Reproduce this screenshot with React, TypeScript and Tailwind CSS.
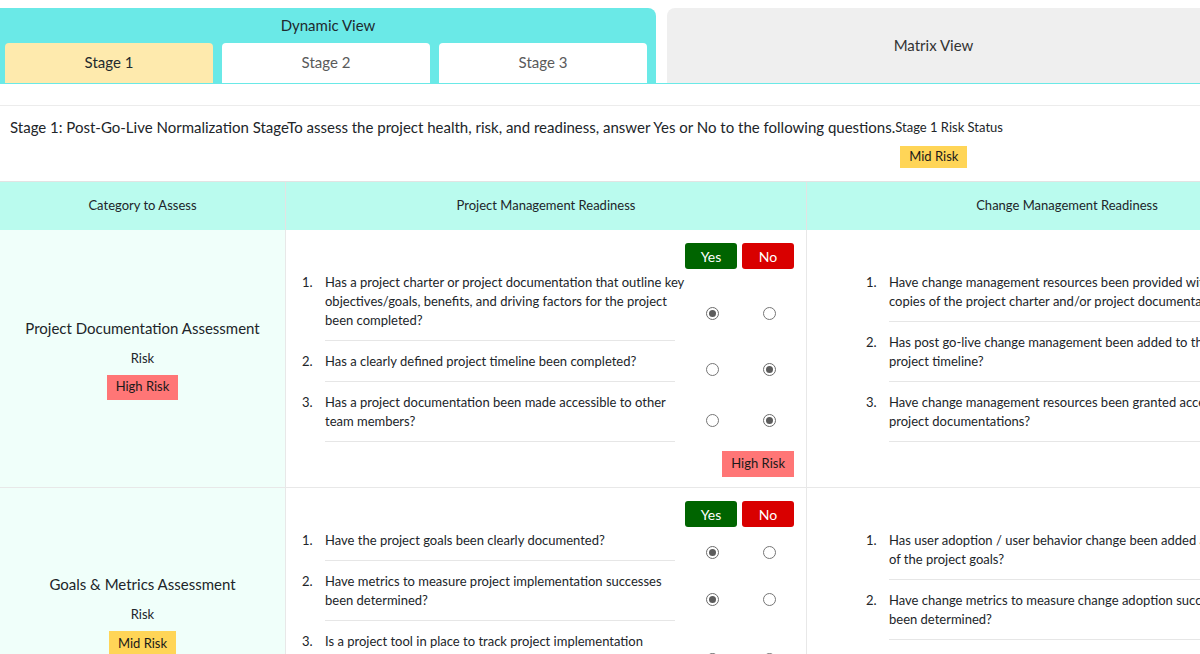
import React from 'react';

type Q = { text: string; answer?: 'yes' | 'no' };

const ROWS = [
  {
    category: 'Project Documentation Assessment',
    risk: 'High Risk',
    minH: '',
    pm: [
      { text: 'Has a project charter or project documentation that outline key objectives/goals, benefits, and driving factors for the project been completed?', answer: 'yes' },
      { text: 'Has a clearly defined project timeline been completed?', answer: 'no' },
      { text: 'Has a project documentation been made accessible to other team members?', answer: 'no' },
    ] as Q[],
    cm: [
      { text: 'Have change management resources been provided with copies of the project charter and/or project documentation?' },
      { text: 'Has post go-live change management been added to the project timeline?' },
      { text: 'Have change management resources been granted access to project documentations?' },
    ] as Q[],
  },
  {
    category: 'Goals & Metrics Assessment',
    risk: 'Mid Risk',
    minH: 'min-h-[255px]',
    pm: [
      { text: 'Have the project goals been clearly documented?', answer: 'yes' },
      { text: 'Have metrics to measure project implementation successes been determined?', answer: 'yes' },
      { text: 'Is a project tool in place to track project implementation progress?', answer: 'yes' },
    ] as Q[],
    cm: [
      { text: 'Has user adoption / user behavior change been added as part of the project goals?' },
      { text: 'Have change metrics to measure change adoption successes been determined?' },
      { text: 'Have change adoption tracking tools been put in place?' },
    ] as Q[],
  },
];

function RiskBadge({ risk, className = '' }: { risk: string; className?: string }) {
  const bg = risk === 'High Risk' ? 'bg-[#ff7676]' : 'bg-[#ffd557]';
  return <span className={`inline-flex items-center px-[9px] text-[13px] text-[#1a1a1a] ${bg} ${className}`}>{risk}</span>;
}

function Radio({ checked }: { checked?: boolean }) {
  return (
    <span className={`w-[13px] h-[13px] rounded-full border bg-white flex items-center justify-center ${checked ? 'border-[#6b6b6b] border-[1.5px]' : 'border-[#767676]'}`}>
      {checked && <span className="w-[7px] h-[7px] rounded-full bg-[#5c5c5c]" />}
    </span>
  );
}

function QuestionList({ items, risk, wide }: { items: Q[]; risk?: string; wide?: boolean }) {
  return (
    <div className="w-[492px] shrink-0 pt-[13px] pb-[10px]">
      <div className="flex justify-end gap-[5px]">
        <div className="w-[52px] h-[26px] rounded-[3px] bg-[#006400] text-white text-[14px] flex items-center justify-center">Yes</div>
        <div className="w-[52px] h-[26px] rounded-[3px] bg-[#d90000] text-white text-[14px] flex items-center justify-center">No</div>
      </div>
      {items.map((q, i) => (
        <div key={i} className="flex text-[13px] leading-[19px] text-[#212529]">
          <div className={`w-[23px] shrink-0 ${i === 0 ? 'pt-[4px]' : 'pt-[11px]'}`}>{i + 1}.</div>
          <div className={`w-[350px] shrink-0 border-b border-[#e6e6e6] pb-[10px] ${i === 0 ? 'pt-[4px]' : 'pt-[11px]'}`}>
            <p className={wide ? 'w-[362px]' : 'w-[350px]'}>{q.text}</p>
          </div>
          <div className="ml-[10px] flex pt-[16px] gap-[5px] items-center">
            <div className="w-[52px] flex justify-center pl-[3px]"><Radio checked={q.answer === 'yes'} /></div>
            <div className="w-[52px] flex justify-center pl-[2px]"><Radio checked={q.answer === 'no'} /></div>
          </div>
        </div>
      ))}
      {risk && (
        <div className="flex justify-end mt-[9px]">
          <RiskBadge risk={risk} className="h-[26px]" />
        </div>
      )}
    </div>
  );
}

export default function App() {
  return (
    <div className="w-[1200px] h-[654px] overflow-hidden bg-white text-[#212529]" style={{ fontFamily: '"Lato", "Noto Sans", sans-serif' }}>
      {/* View tabs */}
      <div className="pt-[8px] flex gap-[11px] border-b border-[#6ae9e7]">
        <div className="w-[656px] h-[75px] bg-[#6ae9e7] rounded-tr-[8px] flex flex-col">
          <div className="h-[35px] flex items-center justify-center text-[15px] text-[#1f2a2e]">Dynamic View</div>
          <div className="flex-1 grid grid-cols-3 gap-[9px] pl-[5px] pr-[9px]">
            <div className="bg-[#feeaad] rounded-t-[4px] flex items-center justify-center text-[15px] text-[#1f2a2e] pb-[1px]">Stage 1</div>
            <div className="bg-white rounded-t-[4px] flex items-center justify-center text-[15px] text-[#5a5a5a] pb-[1px]">Stage 2</div>
            <div className="bg-white rounded-t-[4px] flex items-center justify-center text-[15px] text-[#5a5a5a] pb-[1px]">Stage 3</div>
          </div>
        </div>
        <div className="flex-1 h-[75px] bg-[#efefef] rounded-tl-[8px] flex items-center justify-center text-[15px] text-[#333]">Matrix View</div>
      </div>

      {/* Stage description */}
      <div className="mt-[21px] border-t border-[#ececec] h-[76px] flex items-start pl-[10px] pt-[11px]">
        <span className="text-[15px] leading-[20px] whitespace-nowrap">
          Stage 1: Post-Go-Live Normalization StageTo assess the project health, risk, and readiness, answer Yes or No to the following questions.
        </span>
        <div className="flex flex-col items-start pt-[1px]">
          <span className="text-[13px] leading-[18px] whitespace-nowrap">Stage 1 Risk Status</span>
          <RiskBadge risk="Mid Risk" className="h-[22px] mt-[10px] ml-[5px]" />
        </div>
      </div>

      {/* Assessment table */}
      <div className="grid grid-cols-[286px_521px_520px] w-[1327px]">
        <div className="h-[49px] bg-[#bafbee] border-t border-r border-[#e3e3e3] flex items-center justify-center text-[13px]">Category to Assess</div>
        <div className="h-[49px] bg-[#bafbee] border-t border-r border-[#e3e3e3] flex items-center justify-center text-[13px]">Project Management Readiness</div>
        <div className="h-[49px] bg-[#bafbee] border-t border-[#e3e3e3] flex items-center justify-center text-[13px]">Change Management Readiness</div>

        {ROWS.map((row) => (
          <React.Fragment key={row.category}>
            <div className={`bg-[#f0fffa] border-r border-b border-[#e8e8e8] flex flex-col items-center justify-center ${row.minH}`}>
              <div className="text-[15px] leading-[20px]">{row.category}</div>
              <div className="text-[13px] leading-[18px] mt-[11px]">Risk</div>
              <RiskBadge risk={row.risk} className="h-[25px] mt-[8px]" />
            </div>
            <div className="border-r border-b border-[#e8e8e8] pl-[16px]">
              <QuestionList items={row.pm} risk={row.risk} wide />
            </div>
            <div className="border-b border-[#e8e8e8] pl-[59px]">
              <QuestionList items={row.cm} />
            </div>
          </React.Fragment>
        ))}
      </div>
    </div>
  );
}
